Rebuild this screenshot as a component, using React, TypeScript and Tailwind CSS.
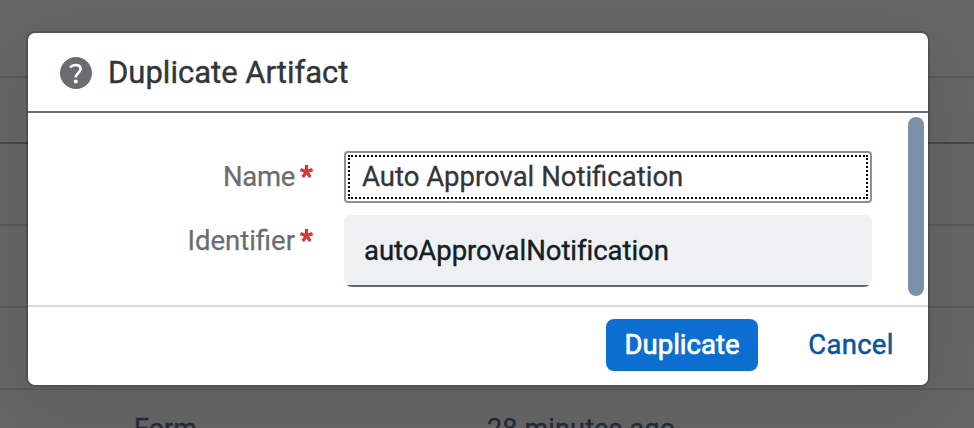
import React from "react";

const FONT = "font-['Roboto','Liberation_Sans',sans-serif]";

function BackgroundTable() {
  return (
    <div className="flex h-full flex-col bg-[#666666] text-[27px] leading-[32px] text-[#252d38]">
      <div className="h-[78px] shrink-0 border-b-2 border-[#595959]" />
      <div className="h-[66px] shrink-0 border-b-2 border-[#434850]" />
      <div className="h-[82px] shrink-0 border-b-2 border-[#595959]" />
      <div className="h-[82px] shrink-0 border-b-2 border-[#595959]" />
      <div className="h-[82px] shrink-0 border-b-2 border-[#595959]" />
      <div className="flex h-[82px] shrink-0 pt-[23px] [-webkit-text-stroke:0.4px_#252d38]">
        <span className="w-[487px] shrink-0 pl-[134px]">Form</span>
        <span className="whitespace-nowrap tracking-[0.15px]">28 minutes ago</span>
      </div>
    </div>
  );
}

function QuestionIcon() {
  return (
    <svg className="size-8 shrink-0" viewBox="0 0 32 32" fill="none">
      <circle cx="16" cy="16" r="16" fill="#6a6d70" />
      <path
        d="M10 10.3C11.4 8.9 13.2 8 15.6 8c3.3 0 5 1.7 5 4.1 0 3.7-4.9 4-4.9 8.3"
        stroke="#fff"
        strokeWidth="2.6"
      />
      <circle cx="15.8" cy="24.6" r="2" fill="#fff" />
    </svg>
  );
}

function RequiredMark() {
  return (
    <svg className="ml-[5px] mt-[14px] size-[13px] shrink-0" viewBox="0 0 13 13" stroke="#d03a38" strokeWidth="3.2">
      <path d="M6.5 6.8V0M6.5 6.8L.4 4.6M6.5 6.8L12.6 4.6M6.5 6.8L2.7 12M6.5 6.8L10.3 12" />
    </svg>
  );
}

function Label({ children }: { children: React.ReactNode }) {
  return (
    <div className="flex w-[285px] shrink-0 justify-end text-[#6a6d70] [-webkit-text-stroke:0.25px_#6a6d70]">
      <span>{children}</span>
      <RequiredMark />
    </div>
  );
}

export default function App() {
  return (
    <div className={`relative h-[428px] w-[974px] overflow-hidden ${FONT}`}>
      <BackgroundTable />
      <div className="absolute left-[28px] top-[33px] flex h-[352px] w-[900px] flex-col overflow-hidden rounded-[7px] bg-white text-[27.5px] leading-[40px] shadow-[0_0_0_2px_rgba(0,0,0,0.17),0_20px_80px_0_rgba(0,0,0,0.1)]">
        <header className="flex h-[80px] shrink-0 items-center border-b-2 border-[#6a6d70] pl-8 pt-[2px]">
          <QuestionIcon />
          <h1 className="ml-4 whitespace-nowrap text-[31px] text-[#32363a] [-webkit-text-stroke:0.4px_#32363a]">
            Duplicate Artifact
          </h1>
        </header>
        <main className="flex h-[192px] shrink-0 justify-between pr-1">
          <div className="flex flex-col gap-3 pt-[38px]">
            <div className="flex h-[52px]">
              <Label>
                <span className="block pt-[6px] tracking-[-0.3px]">Name</span>
              </Label>
              <div className="ml-[31px] w-[528px] rounded-[4px] border-2 border-[#89919e] p-[2px]">
                <div className="flex h-[44px] items-center whitespace-nowrap border-2 border-dotted border-black pl-3 text-[#32363a] [-webkit-text-stroke:0.3px_#32363a]">
                  Auto Approval Notification
                </div>
              </div>
            </div>
            <div className="flex h-[72px]">
              <Label>
                <span className="block pt-[6px]">Identifier</span>
              </Label>
              <div className="ml-[31px] flex w-[528px] flex-col overflow-hidden rounded-[8px] bg-[#eff0f2] text-[#131e29]">
                <div className="flex flex-1 items-center whitespace-nowrap pl-5 pt-[2px] tracking-[-0.04px] [-webkit-text-stroke:0.4px_#131e29]">
                  autoApprovalNotification
                </div>
                <div className="h-[2px] bg-[#556b82]" />
              </div>
            </div>
          </div>
          <div className="mt-1 h-[179px] w-4 rounded-full bg-[#7b91a8]" />
        </main>
        <footer className="flex h-[80px] shrink-0 justify-end border-t-2 border-[#d9d9d9] pr-4 pt-3">
          <button className="h-[52px] w-[152px] rounded-[8px] bg-[#0c6ed1] text-white [-webkit-text-stroke:0.7px_white]">
            Duplicate
          </button>
          <button className="ml-8 h-[52px] w-[122px] tracking-[0.3px] text-[#0854a0] [-webkit-text-stroke:0.5px_#0854a0]">
            Cancel
          </button>
        </footer>
      </div>
    </div>
  );
}
